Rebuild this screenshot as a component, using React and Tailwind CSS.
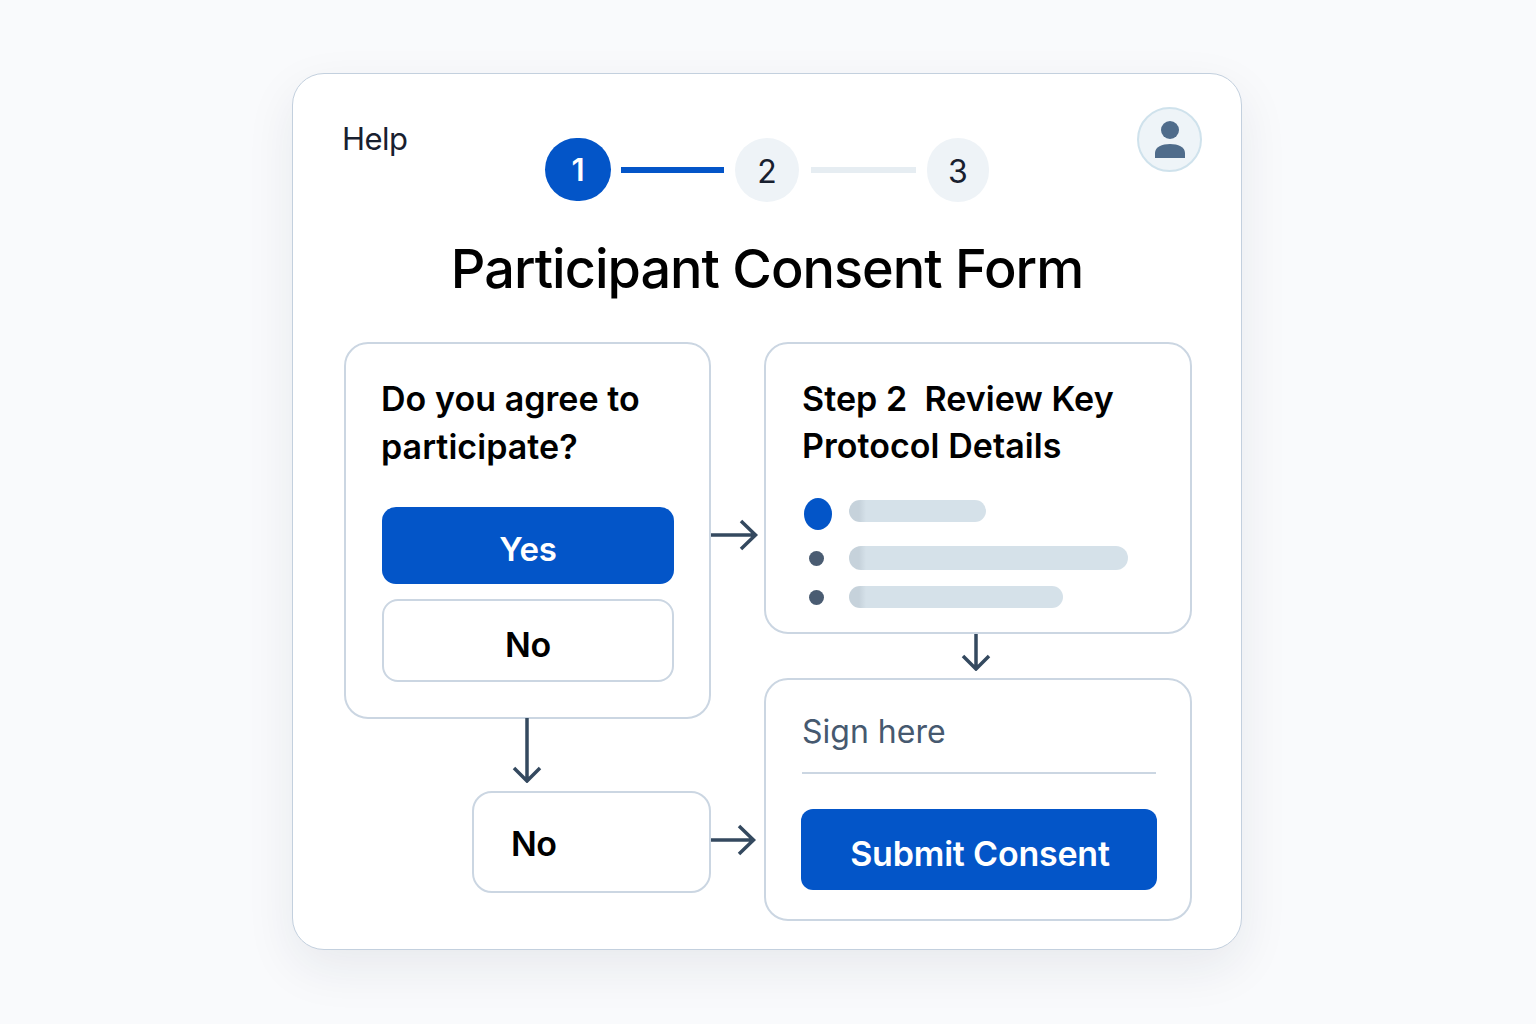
function ArrowRight({ tip = 45, className }) {
  return (
    <svg width="48" height="32" viewBox="0 0 48 32" fill="none" className={className}>
      <path d={`M0 16H${tip}M${tip - 14} 2l14.500 14L${tip - 14} 30`} stroke="#34495f" strokeWidth="3.500" />
    </svg>
  )
}

function ArrowDown({ height, className }) {
  return (
    <svg width="30" height={height} viewBox={`0 0 30 ${height}`} fill="none" className={className}>
      <path
        d={`M15 0V${height - 2}M2 ${height - 15}l13 13 13-13`}
        stroke="#34495f"
        strokeWidth="3.500"
      />
    </svg>
  )
}

function Bullet({ width, big, barClass }) {
  return (
    <div className="flex items-center">
      <div className="w-[28px] mr-[17px] flex justify-center">
        {big ? (
          <div className="w-[28px] h-[32px] rounded-[50%] bg-[#0355c8]" />
        ) : (
          <div className="w-[15px] h-[15px] rounded-full bg-[#4a5c72] -ml-[3px]" />
        )}
      </div>
      <div
        className={`rounded-full bg-[linear-gradient(90deg,#c6d2db_0,#c6d2db_10px,#d5e1e9_17px)] ${barClass}`}
        style={{ width }}
      />
    </div>
  )
}

export default function App() {
  return (
    <div className="min-h-[1024px] bg-[#f9fafc] pt-[73px] font-['Inter',sans-serif]">
      <div className="w-[950px] h-[877px] ml-[292px] rounded-[32px] border border-[#c3d0de] bg-white shadow-[0_18px_50px_rgba(30,41,59,0.08)]">
        <div className="flex pt-[33px] pl-[49px] pr-[39px]">
          <div className="w-[203px] pt-[13px] text-[31px] leading-[38px] tracking-[-0.5px] text-[#18202f]">Help</div>
          <div className="flex items-center mt-[31px] h-[64px]">
            <div className="w-[66px] h-[63px] mb-[1px] pt-[2px] rounded-full bg-[#0355c8] text-white text-[31px] font-semibold flex items-center justify-center">1</div>
            <div className="w-[103px] h-[6px] ml-[10px] bg-[#0355c8]" />
            <div className="w-[64px] h-[64px] ml-[11px] pt-[3px] rounded-full bg-[#eef3f7] text-[#18202f] text-[32px] flex items-center justify-center">2</div>
            <div className="w-[105px] h-[6px] ml-[12px] bg-[#e6edf2]" />
            <div className="w-[62px] h-[64px] ml-[11px] pt-[3px] rounded-full bg-[#eef3f7] text-[#18202f] text-[32px] flex items-center justify-center">3</div>
          </div>
          <div className="flex-1" />
          <div className="w-[65px] h-[65px] rounded-full border-2 border-[#cfe2ec] bg-[#eef4f8] flex items-center justify-center">
            <svg width="32" height="38" viewBox="0 0 32 38" fill="#4f6c8b">
              <circle cx="16" cy="9" r="9" />
              <path d="M1 37v-5c0-6 7-9 15-9s15 3 15 9v5z" />
            </svg>
          </div>
        </div>

        <h1 className="mt-[34px] text-center text-[54px] leading-[66px] font-medium tracking-[-1px] text-black">
          Participant Consent Form
        </h1>

        <div className="flex mt-[40px] pl-[51px]">
          <div className="w-[367px]">
            <div className="h-[377px] rounded-[24px] border-2 border-[#cbd6e2] pt-[31px] pl-[36px] pr-[35px]">
              <p className="-ml-[1px] text-[34px] leading-[48px] font-semibold tracking-[0.05px] text-black">
                Do you agree to
                <br />
                participate?
              </p>
              <div className="mt-[36px] h-[77px] pt-[9px] rounded-[14px] bg-[#0355c8] text-white text-[33px] font-semibold tracking-[-0.2px] flex items-center justify-center">Yes</div>
              <div className="mt-[15px] h-[83px] pt-[8px] rounded-[16px] border-2 border-[#cbd6e2] text-black text-[34px] font-semibold tracking-[-0.2px] flex items-center justify-center">No</div>
            </div>
            <ArrowDown height={65} className="ml-[168px] -mt-[1px]" />
            <div className="ml-[128px] mt-[8px] h-[102px] pt-[3px] rounded-[20px] border-2 border-[#cbd6e2] pl-[37px] flex items-center text-black text-[34px] font-semibold tracking-[-0.5px]">No</div>
          </div>

          <div className="w-[53px]">
            <ArrowRight tip={44} className="mt-[177px]" />
            <ArrowRight tip={42} className="mt-[273px]" />
          </div>

          <div className="w-[428px]">
            <div className="h-[292px] rounded-[24px] border-2 border-[#cbd6e2] pt-[31px] px-[36px]">
              <p className="text-[34px] leading-[47px] font-semibold tracking-[0.05px] text-black whitespace-pre">
                {'Step 2  Review Key\nProtocol Details'}
              </p>
              <div className="mt-[29px] flex flex-col gap-[16px] pl-[2px]">
                <Bullet width={137} big barClass="h-[22px] mb-[6px]" />
                <Bullet width={279} barClass="h-[24px]" />
                <Bullet width={214} barClass="h-[22px] mb-[1px]" />
              </div>
            </div>
            <ArrowDown height={37} className="ml-[197px]" />
            <div className="mt-[7px] h-[243px] rounded-[24px] border-2 border-[#cbd6e2] pt-[32px] pl-[36px] pr-[34px]">
              <div className="h-[62px] pb-[20px] border-b-2 border-[#cbd6e2] text-[32px] leading-[40px] text-[#46596f]">Sign here</div>
              <div className="mt-[35px] -mx-[1px] h-[81px] pt-[8px] pl-[2px] rounded-[12px] bg-[#0355c8] text-white text-[34px] font-semibold tracking-[-0.2px] flex items-center justify-center">Submit Consent</div>
            </div>
          </div>
        </div>
      </div>
    </div>
  )
}
